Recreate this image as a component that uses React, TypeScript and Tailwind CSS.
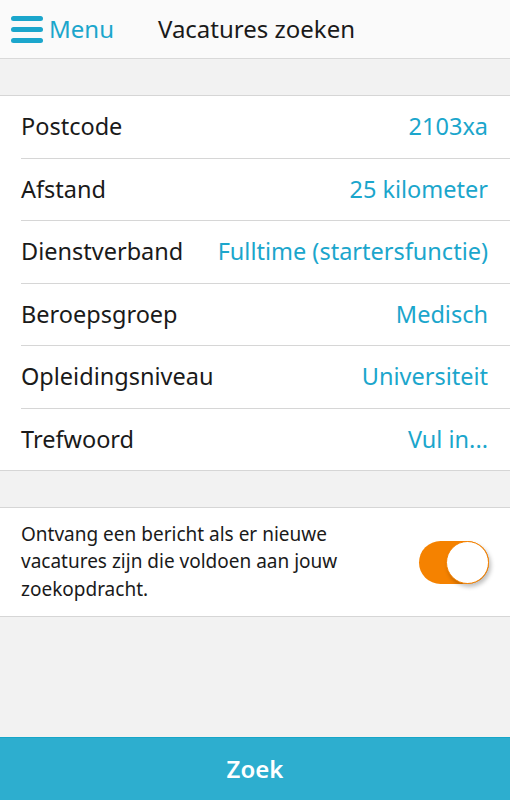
const font = { fontFamily: '"Noto Sans", "Open Sans", sans-serif' };

const rows = [
  { label: "Postcode", value: "2103xa" },
  { label: "Afstand", value: "25 kilometer" },
  { label: "Dienstverband", value: "Fulltime (startersfunctie)" },
  { label: "Beroepsgroep", value: "Medisch" },
  { label: "Opleidingsniveau", value: "Universiteit" },
  { label: "Trefwoord", value: "Vul in..." },
];

function MenuIcon() {
  return (
    <div className="flex w-[32px] flex-col gap-[6px]">
      <span className="block h-[5px] rounded-full bg-[#1ba6cc]" />
      <span className="block h-[5px] rounded-full bg-[#1ba6cc]" />
      <span className="block h-[5px] rounded-full bg-[#1ba6cc]" />
    </div>
  );
}

export default function App() {
  return (
    <div className="flex min-h-screen flex-col bg-[#f2f2f2]" style={font}>
      {/* header */}
      <header className="flex h-[59px] items-center border-b border-[#d9d9d9] bg-[#fafafa] pl-[11px]">
        <MenuIcon />
        <span className="ml-[6px] text-[24px] text-[#1ba6cc]">Menu</span>
        <span className="ml-[44px] text-[24px] text-[#1a1a1a]">Vacatures zoeken</span>
      </header>

      <div className="h-[36px]" />

      {/* filters */}
      <div className="border-y border-[#d6d6d6] bg-white">
        {rows.map((r, i) => (
          <div key={r.label} className="pl-[21px]">
            <div
              className={`flex h-[61.5px] items-center justify-between pr-[22px] ${
                i < rows.length - 1 ? "h-[62.5px] border-b border-[#d6d6d6]" : ""
              }`}
            >
              <span className="text-[23.5px] text-[#1a1a1a]">{r.label}</span>
              <span className="text-[23.5px] text-[#1ba6cc]">{r.value}</span>
            </div>
          </div>
        ))}
      </div>

      <div className="h-[36px]" />

      {/* notificatie */}
      <div className="flex h-[110px] items-center justify-between border-y border-[#d6d6d6] bg-white pl-[21px] pr-[21px]">
        <p className="w-[350px] text-[19px] leading-[27.5px] text-[#1a1a1a]">
          Ontvang een bericht als er nieuwe vacatures zijn die voldoen aan jouw zoekopdracht.
        </p>
        <div className="relative h-[43px] w-[70px] rounded-full bg-[#f58200]">
          <div className="absolute right-0 top-0 h-[43px] w-[43px] rounded-full border border-[#f58200] bg-white shadow-[2px_3px_4px_rgba(0,0,0,0.25)]" />
        </div>
      </div>

      <button className="mt-auto h-[63px] w-full border-t border-[#18a6c9] bg-[#2daecf] text-[24px] font-semibold text-white">
        Zoek
      </button>
    </div>
  );
}
